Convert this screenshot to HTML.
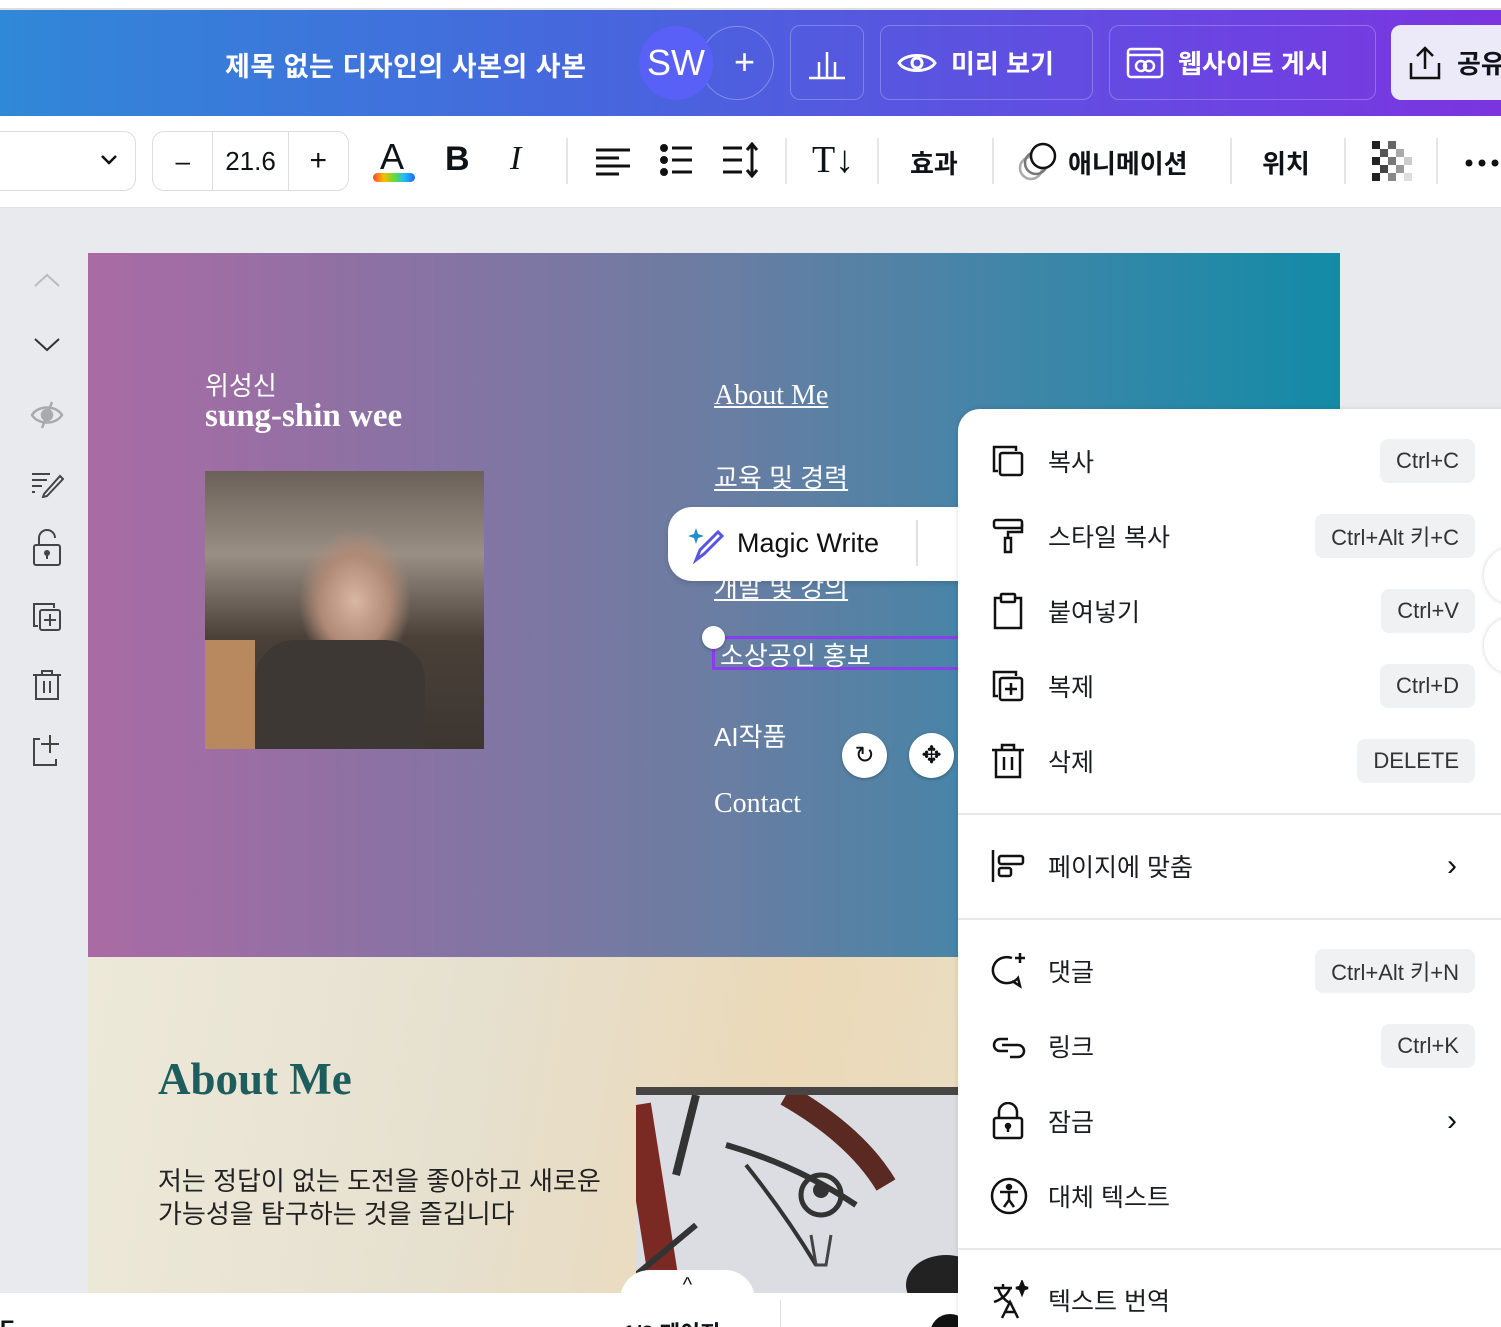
<!DOCTYPE html>
<html><head><meta charset="utf-8"><style>
*{margin:0;padding:0;box-sizing:border-box}
html{width:1501px;height:1327px;overflow:hidden}
body{width:1501px;height:1327px;overflow:hidden;position:relative;background:#e8eaee;font-family:"Liberation Sans","Noto Sans CJK KR",sans-serif;color:#0e1318}
.abs{position:absolute}
.hdr{left:0;top:10px;width:1501px;height:106px;background:linear-gradient(90deg,#3088d8 0%,#4a62de 45%,#6a45e2 80%,#7b34e0 100%)}
.hb{position:absolute;top:15px;height:75px;border:1px solid rgba(255,255,255,.25);border-radius:10px;color:#fff;font-weight:bold;font-size:26px;display:flex;align-items:center;gap:14px;padding-left:16px}
.tb{left:0;top:116px;width:1501px;height:92px;background:#fff;border-bottom:1px solid #e2e2e2}
.sep{position:absolute;top:138px;width:2px;height:46px;background:#e6e6e6}
.side svg{position:absolute;left:30px}
.menu{left:958px;top:409px;width:560px;height:918px;background:#fff;border-radius:22px 0 0 0;box-shadow:0 0 6px rgba(0,0,0,.12)}
.it{position:absolute;left:0;width:543px;height:60px;display:flex;align-items:center}
.it svg{position:absolute;left:32px}
.it .l{position:absolute;left:90px;font-size:25px;color:#1b1d21}
.k{position:absolute;right:26px;height:44px;background:#f0f1f3;border-radius:8px;font-size:22px;color:#333;display:flex;align-items:center;padding:0 16px}
.dv{position:absolute;left:0;width:543px;height:2px;background:#e8e8e8}
.nav{position:absolute;left:714px;color:#fff;font-size:26px;font-family:"Liberation Serif","Noto Sans CJK KR",serif}
</style></head><body>
<div class="abs" style="left:0;top:0;width:1501px;height:10px;background:#fff;border-bottom:2px solid #ddd"></div>
<div class="abs hdr">
 <div class="abs" style="left:225px;top:35px;color:#fff;font-weight:bold;font-size:27px;letter-spacing:0.5px">제목 없는 디자인의 사본의 사본</div>
 <div class="abs" style="left:700px;top:16px;width:74px;height:74px;border-radius:50%;border:1px solid rgba(255,255,255,.3);color:#fff;font-size:36px;line-height:70px;text-align:right;padding-right:18px">+</div>
 <div class="abs" style="left:639px;top:16px;width:74px;height:74px;border-radius:50%;background:#5860f8;color:#fff;font-size:36px;line-height:74px;text-align:center">SW</div>
 <div class="hb" style="left:790px;width:74px;padding:0;justify-content:center"><svg width="40" height="34" viewBox="0 0 40 34" fill="none" stroke="#fff" stroke-width="2.5"><path d="M2 32H38M12 32V16M20 32V6M28 32V16"/></svg></div>
 <div class="hb" style="left:880px;width:213px"><svg width="40" height="28" viewBox="0 0 40 28" fill="none" stroke="#fff" stroke-width="3"><path d="M2 14C8 4 32 4 38 14C32 24 8 24 2 14Z"/><circle cx="20" cy="14" r="5"/></svg>미리 보기</div>
 <div class="hb" style="left:1109px;width:267px"><svg width="38" height="32" viewBox="0 0 38 32" fill="none" stroke="#fff" stroke-width="2.5"><rect x="2" y="2" width="34" height="28" rx="3"/><path d="M2 8H36"/><circle cx="15" cy="19" r="5"/><circle cx="23" cy="19" r="5"/></svg>웹사이트 게시</div>
 <div class="hb" style="left:1391px;width:140px;background:#ece9f8;color:#0e1318;border:none"><svg width="36" height="36" viewBox="0 0 36 36" fill="none" stroke="#111" stroke-width="2.5"><path d="M18 24V3M10 11L18 3L26 11M4 18V33H32V18"/></svg>공유</div>
</div>
<div class="abs tb">
 <div class="abs" style="left:-20px;top:15px;width:156px;height:60px;border:1px solid #ddd;border-radius:12px"></div>
 <svg class="abs" style="left:100px;top:38px" width="18" height="12" viewBox="0 0 18 12" fill="none" stroke="#111" stroke-width="2.5"><path d="M2 2L9 9L16 2"/></svg>
 <div class="abs" style="left:152px;top:15px;width:197px;height:60px;border:1px solid #ddd;border-radius:12px;display:flex;font-size:26px;align-items:center">
  <div style="width:60px;text-align:center">–</div><div style="width:77px;height:58px;border-left:1px solid #ddd;border-right:1px solid #ddd;text-align:center;line-height:58px">21.6</div><div style="width:60px;text-align:center;font-size:30px">+</div></div>
 <div class="abs" style="left:380px;top:20px;font-size:36px">A</div>
 <div class="abs" style="left:373px;top:57px;width:42px;height:9px;border-radius:5px;background:linear-gradient(90deg,#f43,#fb0,#6d3,#2bf,#26f)"></div>
 <div class="abs" style="left:445px;top:24px;font-size:34px;font-weight:bold">B</div>
 <div class="abs" style="left:510px;top:24px;font-size:34px;font-style:italic;font-family:'Liberation Serif',serif">I</div>
 <div class="sep" style="left:566px;top:22px"></div>
 <svg class="abs" style="left:595px;top:30px" width="36" height="30" viewBox="0 0 36 30" stroke="#111" stroke-width="3"><path d="M1 4H35M1 12H24M1 20H35M1 28H24"/></svg>
 <svg class="abs" style="left:660px;top:28px" width="34" height="32" viewBox="0 0 34 32" stroke="#111" stroke-width="3"><circle cx="4" cy="4" r="2.5" fill="#111"/><circle cx="4" cy="16" r="2.5" fill="#111"/><circle cx="4" cy="28" r="2.5" fill="#111"/><path d="M12 4H32M12 16H32M12 28H32"/></svg>
 <svg class="abs" style="left:722px;top:26px" width="38" height="36" viewBox="0 0 38 36" fill="none" stroke="#111" stroke-width="3"><path d="M1 6H20M1 18H20M1 30H20M30 2V34M25 8L30 2L35 8M25 28L30 34L35 28"/></svg>
 <div class="sep" style="left:785px;top:22px"></div>
 <div class="abs" style="left:812px;top:22px;font-size:38px;font-family:'Liberation Serif',serif">T↓</div>
 <div class="sep" style="left:877px;top:22px"></div>
 <div class="abs" style="left:910px;top:28px;font-size:26px;font-weight:bold">효과</div>
 <div class="sep" style="left:992px;top:22px"></div>
 <svg class="abs" style="left:1018px;top:24px" width="42" height="42" viewBox="0 0 42 42" fill="none" stroke-width="2.5"><circle cx="13" cy="28" r="11" stroke="#aaa"/><circle cx="18" cy="23" r="11" stroke="#777"/><circle cx="25" cy="16" r="12" stroke="#111" fill="#fff"/></svg>
 <div class="abs" style="left:1068px;top:28px;font-size:26px;font-weight:bold">애니메이션</div>
 <div class="sep" style="left:1230px;top:22px"></div>
 <div class="abs" style="left:1262px;top:28px;font-size:26px;font-weight:bold">위치</div>
 <div class="sep" style="left:1344px;top:22px"></div>
 <svg class="abs" style="left:1372px;top:25px" width="40" height="40" viewBox="0 0 40 40"><g fill="#222"><rect x="0" y="0" width="8" height="8"/><rect x="16" y="0" width="8" height="8" fill="#666"/><rect x="8" y="8" width="8" height="8" fill="#555"/><rect x="24" y="8" width="8" height="8" fill="#aaa"/><rect x="0" y="16" width="8" height="8"/><rect x="16" y="16" width="8" height="8" fill="#777"/><rect x="32" y="16" width="8" height="8" fill="#ccc"/><rect x="8" y="24" width="8" height="8" fill="#444"/><rect x="24" y="24" width="8" height="8" fill="#999"/><rect x="0" y="32" width="8" height="8"/><rect x="16" y="32" width="8" height="8" fill="#888"/><rect x="32" y="32" width="8" height="8" fill="#ddd"/></g></svg>
 <div class="sep" style="left:1436px;top:22px"></div>
 <svg class="abs" style="left:1465px;top:42px" width="36" height="10" viewBox="0 0 36 10"><circle cx="4" cy="5" r="3.5" fill="#111"/><circle cx="17" cy="5" r="3.5" fill="#111"/><circle cx="30" cy="5" r="3.5" fill="#111"/></svg>
</div>
<div class="side">
<svg style="top:270px" width="34" height="20" viewBox="0 0 34 20" fill="none" stroke="#bbb" stroke-width="2"><path d="M5 16L17 5L29 16"/></svg>
<svg style="top:335px" width="34" height="20" viewBox="0 0 34 20" fill="none" stroke="#333" stroke-width="2"><path d="M5 4L17 15L29 4"/></svg>
<svg style="top:400px" width="34" height="30" viewBox="0 0 34 30" fill="none" stroke="#aaa" stroke-width="2.5"><path d="M2 15C8 5 26 5 32 15C26 25 8 25 2 15Z"/><circle cx="17" cy="15" r="5" fill="#aaa"/><path d="M22 2L12 28"/></svg>
<svg style="top:468px" width="34" height="30" viewBox="0 0 34 30" fill="none" stroke="#444" stroke-width="2"><path d="M2 6H20M2 12H17M2 18H12M2 24H5M14 26L30 8L33 11L17 28L13 29Z"/></svg>
<svg style="top:528px" width="34" height="40" viewBox="0 0 34 40" fill="none" stroke="#444" stroke-width="2"><path d="M9 17V10A8 8 0 0 1 25 10"/><rect x="4" y="17" width="26" height="20" rx="2"/><circle cx="17" cy="25" r="2" fill="#444"/><path d="M17 26V31"/></svg>
<svg style="top:600px" width="34" height="34" viewBox="0 0 34 34" fill="none" stroke="#444" stroke-width="2"><path d="M8 26H4V4H24V8"/><rect x="10" y="10" width="20" height="20" rx="2"/><path d="M20 14V26M14 20H26"/></svg>
<svg style="top:667px" width="34" height="36" viewBox="0 0 34 36" fill="none" stroke="#444" stroke-width="2"><path d="M3 8H31M12 8V4H22V8M6 8V32H28V8M14 14V26M20 14V26"/></svg>
<svg style="top:733px" width="34" height="36" viewBox="0 0 34 36" fill="none" stroke="#444" stroke-width="2"><path d="M10 6H4V32H26V26M20 2V20M11 11H29"/></svg>
</div>
<div class="abs" style="left:88px;top:253px;width:1252px;height:704px;background:linear-gradient(90deg,#aa6ba4 0%,#8a72a4 25%,#6b7da2 50%,#3e86a8 75%,#128ba7 100%)"></div>
<div class="abs" style="left:88px;top:957px;width:1252px;height:336px;background:linear-gradient(100deg,#ede9d9 0%,#e6e0cf 30%,#ebd9b8 55%,#e9e4d4 100%)"></div>
<div class="abs" style="left:205px;top:366px;color:#fff;font-size:26px">위성신</div>
<div class="abs" style="left:205px;top:398px;color:#fff;font-size:33px;font-weight:bold;font-family:'Liberation Serif',serif">sung-shin wee</div>
<div class="abs" style="left:205px;top:471px;width:279px;height:278px;background:radial-gradient(ellipse 70px 90px at 150px 130px,#d9b7a3 0%,#b08a76 50%,transparent 80%),linear-gradient(180deg,#6b6158 0%,#9a8f85 30%,#4a4038 60%,#3c3631 100%)"></div>
<div class="abs" style="left:255px;top:640px;width:170px;height:109px;background:#3d3833;border-radius:40px 40px 0 0"></div>
<div class="abs" style="left:205px;top:640px;width:50px;height:109px;background:#b8895f"></div>
<div class="nav" style="top:380px;text-decoration:underline;font-size:28px">About Me</div>
<div class="nav" style="top:458px;text-decoration:underline;font-family:'Liberation Sans','Noto Sans CJK KR',sans-serif">교육 및 경력</div>
<div class="nav" style="top:568px;text-decoration:underline;font-family:'Liberation Sans','Noto Sans CJK KR',sans-serif">개발 및 강의</div>
<div class="abs" style="left:712px;top:636px;width:260px;height:34px;border:3px solid #8b3cf0"></div>
<div class="nav" style="left:720px;top:636px;font-family:'Liberation Sans','Noto Sans CJK KR',sans-serif">소상공인 홍보</div>
<div class="abs" style="left:702px;top:626px;width:23px;height:23px;border-radius:50%;background:#fff;box-shadow:0 1px 3px rgba(0,0,0,.3)"></div>
<div class="nav" style="top:717px;font-family:'Liberation Sans','Noto Sans CJK KR',sans-serif">AI작품</div>
<div class="nav" style="top:788px;font-size:28px">Contact</div>
<div class="abs" style="left:842px;top:733px;width:45px;height:45px;border-radius:50%;background:#fff;box-shadow:0 1px 3px rgba(0,0,0,.3);text-align:center;line-height:45px;font-size:24px">↻</div>
<div class="abs" style="left:909px;top:733px;width:45px;height:45px;border-radius:50%;background:#fff;box-shadow:0 1px 3px rgba(0,0,0,.3);text-align:center;line-height:45px;font-size:24px">✥</div>
<div class="abs" style="left:668px;top:507px;width:320px;height:74px;background:#fff;border-radius:24px;box-shadow:0 2px 6px rgba(0,0,0,.15)"></div>
<svg class="abs" style="left:686px;top:524px" width="40" height="40" viewBox="0 0 40 40" fill="none"><path d="M8 10L10 4L12 10L18 12L12 14L10 20L8 14L2 12Z" fill="#1b8fd0"/><path d="M10 36L14 26L32 8L36 12L18 30Z" stroke="#5856e0" stroke-width="3"/></svg>
<div class="abs" style="left:737px;top:528px;font-size:27px;color:#111">Magic Write</div>
<div class="abs" style="left:916px;top:520px;width:2px;height:46px;background:#e0e0e0"></div>
<div class="abs" style="left:158px;top:1053px;color:#1e5d5e;font-size:45px;font-weight:bold;font-family:'Liberation Serif',serif">About Me</div>
<div class="abs" style="left:158px;top:1165px;font-size:26px;line-height:33px;color:#222">저는 정답이 없는 도전을 좋아하고 새로운<br>가능성을 탐구하는 것을 즐깁니다</div>
<div class="abs" style="left:636px;top:1087px;width:322px;height:206px;background:#dcdde3;border-top:8px solid #4a4545;overflow:hidden">
 <svg width="322" height="206" viewBox="0 0 322 206" fill="none"><path d="M0 10L30 200" stroke="#7a2a22" stroke-width="30"/><path d="M60 0L40 80" stroke="#333" stroke-width="8"/><path d="M150 0Q220 40 250 90" stroke="#5a2a22" stroke-width="22"/><path d="M90 50Q160 70 220 110" stroke="#333" stroke-width="6"/><path d="M110 70Q150 120 180 170" stroke="#333" stroke-width="4"/><circle cx="185" cy="100" r="20" stroke="#333" stroke-width="5"/><circle cx="185" cy="95" r="8" fill="#333"/><path d="M175 140L180 170H190L195 140" stroke="#444" stroke-width="3"/><ellipse cx="310" cy="190" rx="40" ry="30" fill="#222"/><path d="M0 180L60 130" stroke="#333" stroke-width="6"/></svg>
</div>
<div class="abs" style="left:0;top:1293px;width:958px;height:34px;background:#fff"></div>
<div class="abs" style="left:620px;top:1270px;width:135px;height:30px;background:#fff;border-radius:30px 30px 0 0;text-align:center;font-size:20px;line-height:30px">^</div>
<div class="abs" style="left:0;top:1316px;font-size:22px;font-weight:bold">E</div>
<div class="abs" style="left:623px;top:1316px;font-size:22px;font-weight:bold">1/2 페이지</div>
<div class="abs" style="left:780px;top:1300px;width:1px;height:27px;background:#ddd"></div>
<div class="abs" style="left:930px;top:1314px;width:40px;height:40px;border-radius:50%;background:#111"></div>
<div class="abs menu">
 <div class="it" style="top:22px"><svg width="36" height="36" viewBox="0 0 36 36" fill="none" stroke="#111" stroke-width="2.5"><path d="M8 28H4V4H26V8"/><rect x="10" y="10" width="22" height="22" rx="2"/></svg><span class="l">복사</span><span class="k">Ctrl+C</span></div>
 <div class="it" style="top:97px"><svg width="36" height="36" viewBox="0 0 36 36" fill="none" stroke="#111" stroke-width="2.5"><rect x="4" y="2" width="28" height="8" rx="2"/><path d="M32 6V14H18V20M15 20H21V34H15Z"/></svg><span class="l">스타일 복사</span><span class="k">Ctrl+Alt 키+C</span></div>
 <div class="it" style="top:172px"><svg width="36" height="38" viewBox="0 0 36 38" fill="none" stroke="#111" stroke-width="2.5"><path d="M11 6H5V36H31V6H25"/><rect x="11" y="2" width="14" height="8" rx="1"/></svg><span class="l">붙여넣기</span><span class="k">Ctrl+V</span></div>
 <div class="it" style="top:247px"><svg width="36" height="36" viewBox="0 0 36 36" fill="none" stroke="#111" stroke-width="2.5"><path d="M8 28H4V4H26V8"/><rect x="10" y="10" width="22" height="22" rx="2"/><path d="M21 15V27M15 21H27"/></svg><span class="l">복제</span><span class="k">Ctrl+D</span></div>
 <div class="it" style="top:322px"><svg width="36" height="38" viewBox="0 0 36 38" fill="none" stroke="#111" stroke-width="2.5"><path d="M2 8H34M12 8V3H24V8M6 8V35H30V8M14 15V28M22 15V28"/></svg><span class="l">삭제</span><span class="k">DELETE</span></div>
 <div class="dv" style="top:404px"></div>
 <div class="it" style="top:427px"><svg width="36" height="36" viewBox="0 0 36 36" fill="none" stroke="#111" stroke-width="2.5"><path d="M3 2V34"/><rect x="9" y="8" width="24" height="8" rx="2"/><rect x="9" y="20" width="12" height="8" rx="2"/></svg><span class="l">페이지에 맞춤</span><span style="position:absolute;right:44px;font-size:30px">›</span></div>
 <div class="dv" style="top:509px"></div>
 <div class="it" style="top:532px"><svg width="38" height="38" viewBox="0 0 38 38" fill="none" stroke="#111" stroke-width="2.5"><path d="M22 6A14 13 0 1 0 28 26L30 34L22 29"/><path d="M30 1V11M25 6H35"/></svg><span class="l">댓글</span><span class="k">Ctrl+Alt 키+N</span></div>
 <div class="it" style="top:607px"><svg width="38" height="30" viewBox="0 0 38 30" fill="none" stroke="#111" stroke-width="2.5"><path d="M18 8H10A6 6 0 0 0 10 20H18M12 14H28A6 6 0 0 1 28 26H20"/></svg><span class="l">링크</span><span class="k">Ctrl+K</span></div>
 <div class="it" style="top:682px"><svg width="36" height="38" viewBox="0 0 36 38" fill="none" stroke="#111" stroke-width="2.5"><path d="M9 16V10A9 9 0 0 1 27 10V16"/><rect x="4" y="16" width="28" height="20" rx="2"/><circle cx="18" cy="24" r="2" fill="#111"/><path d="M18 25V30"/></svg><span class="l">잠금</span><span style="position:absolute;right:44px;font-size:30px">›</span></div>
 <div class="it" style="top:757px"><svg width="38" height="38" viewBox="0 0 38 38" fill="none" stroke="#111" stroke-width="2.5"><circle cx="19" cy="19" r="17"/><circle cx="19" cy="10" r="2" fill="#111"/><path d="M10 15H28M19 15V23L14 30M19 23L24 30"/></svg><span class="l">대체 텍스트</span></div>
 <div class="dv" style="top:839px"></div>
 <div class="it" style="top:861px"><svg width="40" height="40" viewBox="0 0 40 40" fill="none" stroke="#111" stroke-width="2.5"><path d="M4 8H22M13 4V8M8 8Q12 20 22 24M20 8Q16 18 4 22M12 38L20 22L28 38M15 32H25"/><path d="M32 2L34 7L38 8L34 9L32 14L30 9L26 8L30 7Z" fill="#111"/></svg><span class="l">텍스트 번역</span></div>
</div>
<div class="abs" style="left:1484px;top:548px;width:50px;height:55px;border-radius:50%;background:#fff;box-shadow:0 0 4px rgba(0,0,0,.2)"></div>
<div class="abs" style="left:1484px;top:618px;width:50px;height:55px;border-radius:50%;background:#fff;box-shadow:0 0 4px rgba(0,0,0,.2)"></div>
</body></html>
